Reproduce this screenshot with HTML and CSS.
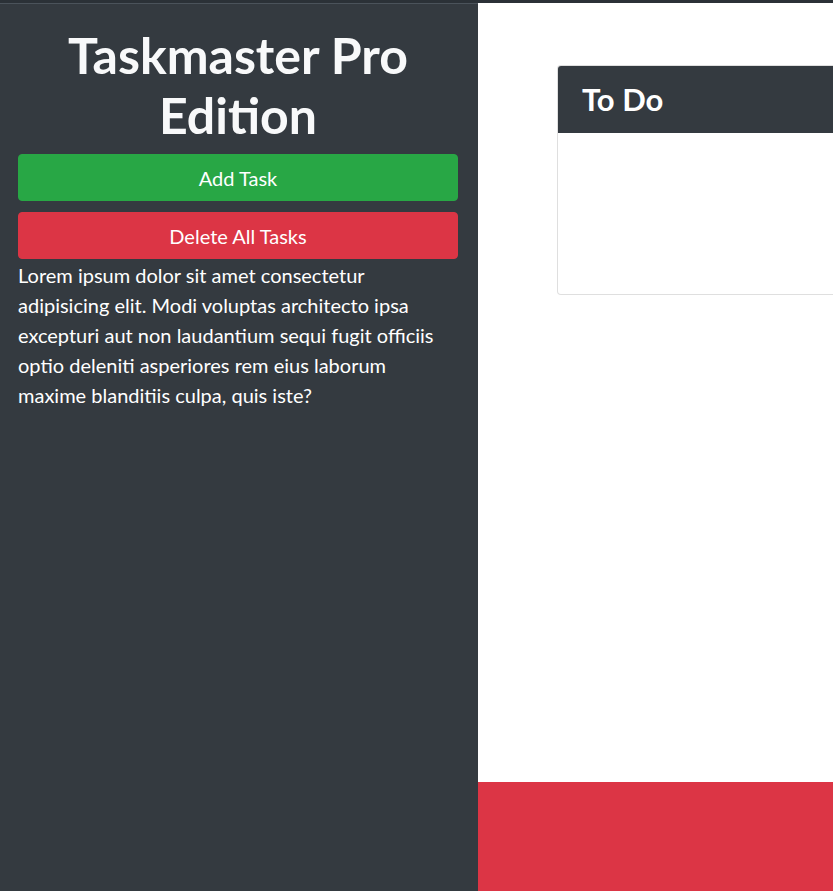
FILE: index.html
```html
<!DOCTYPE html>
<html lang="en">
<head>
<meta charset="utf-8">
<title>Taskmaster Pro Edition</title>
<link rel="stylesheet" href="styles.css">
</head>
<body>
<div class="topbar"></div>
<div class="layout">
  <aside class="sidebar">
    <h1 class="title">Taskmaster Pro Edition</h1>
    <button class="btn btn-success">Add Task</button>
    <button class="btn btn-danger">Delete All Tasks</button>
    <p class="lead">Lorem ipsum dolor sit amet consectetur adipisicing elit. Modi voluptas architecto ipsa excepturi aut non laudantium sequi fugit officiis optio deleniti asperiores rem eius laborum maxime blanditiis culpa, quis iste?</p>
  </aside>
  <main class="main">
    <section class="board">
      <div class="card">
        <div class="card-header"><h2 class="card-title">To Do</h2></div>
        <div class="card-body"></div>
      </div>
    </section>
    <footer class="footer"></footer>
  </main>
</div>
</body>
</html>
```
FILE: styles.css
```css
* { box-sizing: border-box; }
html, body { margin: 0; height: 100%; }
body {
  font-family: Lato, "Noto Sans", sans-serif;
  color: #212529;
  background: #fff;
  overflow: hidden;
}
.topbar {
  height: 3px;
  background: #2b3137;
}
.layout {
  display: grid;
  grid-template-columns: 478px 1fr;
  height: calc(100% - 3px);
}
.sidebar {
  background: #343a40;
  border-top: 1px solid #4b535b;
  padding: 21px 20px 0 18px;
  color: #f8f9fa;
  display: flex;
  flex-direction: column;
}
.title {
  margin: 0 0 9px;
  font-size: 50px;
  line-height: 60px;
  font-weight: 700;
  text-align: center;
  color: #f8f9fa;
}
.btn {
  display: block;
  width: 100%;
  font-family: inherit;
  font-size: 20px;
  line-height: 29px;
  padding: 9px 16px 7px;
  border: 1px solid transparent;
  border-radius: 4px;
  color: #fff;
  text-align: center;
}
.btn-success { background: #28a745; border-color: #28a745; }
.btn-danger { background: #dc3545; border-color: #dc3545; margin-top: 11px; }
.lead {
  margin: 0;
  font-size: 20px;
  line-height: 30px;
  padding-top: 1px;
  color: #fff;
}
.main {
  display: flex;
  flex-direction: column;
  justify-content: space-between;
  overflow: hidden;
  min-width: 0;
}
.board {
  padding: 62px 0 0 79px;
}
.card {
  width: 420px;
  border: 1px solid rgba(0,0,0,.125);
  border-radius: 4px;
  overflow: hidden;
  background: #fff;
}
.card-header {
  background: #343a40;
  padding: 14px 24px 15px;
}
.card-title {
  margin: 0;
  font-size: 31px;
  line-height: 38px;
  font-weight: 700;
  color: #fff;
}
.card-body {
  height: 161px;
}
.footer {
  height: 109px;
  background: #dc3545;
}
```
